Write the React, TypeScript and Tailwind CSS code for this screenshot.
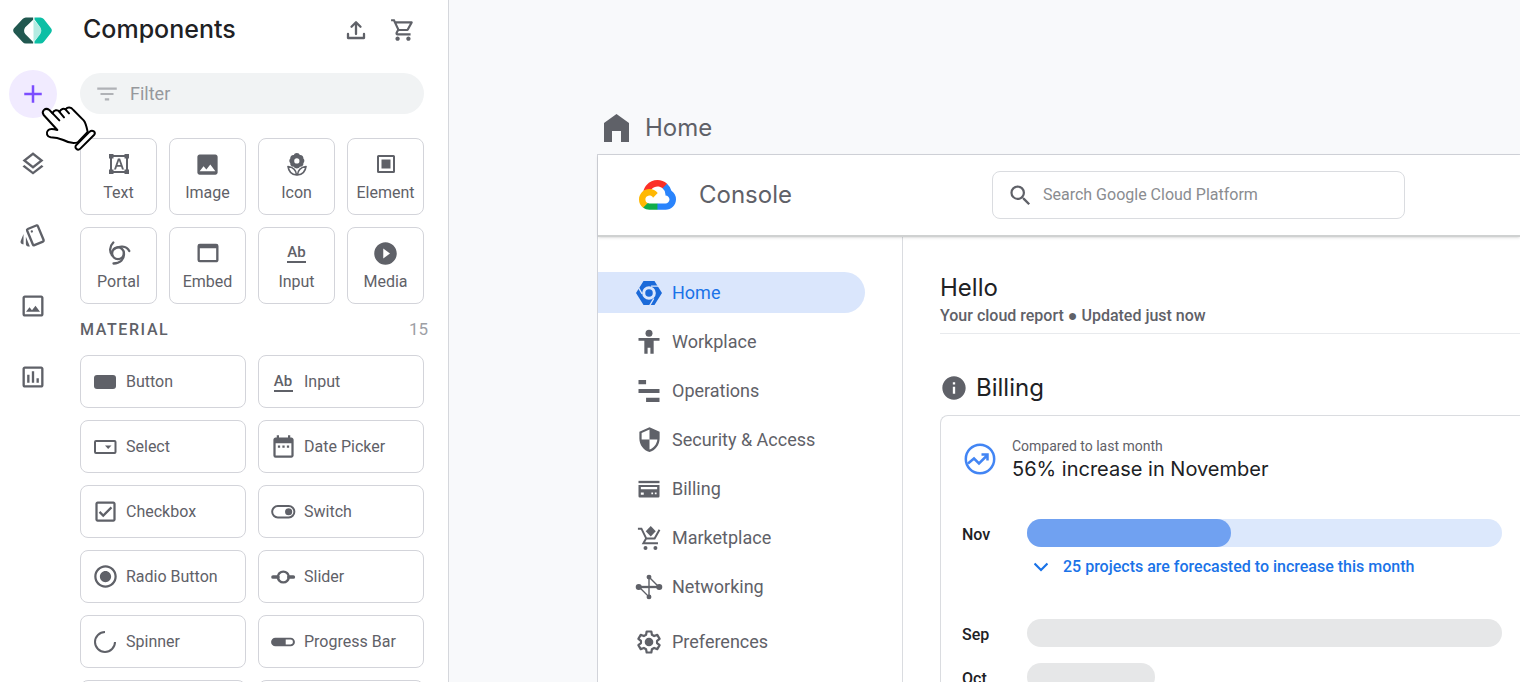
import type { ReactNode } from "react";
import {
  MdAdd,
  MdDateRange,
  MdFilterList,
  MdImage,
  MdInfo,
  MdOutlineCheckBox,
  MdOutlineImage,
  MdOutlineInsertChart,
  MdOutlineLayers,
  MdOutlineShoppingCart,
  MdOutlineStyle,
  MdPlayCircleFilled,
  MdRadioButtonChecked,
  MdSearch,
  MdSecurity,
  MdWebAsset,
} from "react-icons/md";

const sans = "font-['Roboto',sans-serif]";
const display = "font-['Inter',sans-serif]";

function Svg({ children, box = "0 0 24 24", className = "size-7" }: { children: ReactNode; box?: string; className?: string }) {
  return (
    <svg viewBox={box} className={className} fill="currentColor" aria-hidden="true">
      {children}
    </svg>
  );
}

function AbIcon() {
  return (
    <span className="flex w-[19px] flex-col items-center border-b-2 border-current text-[15px] leading-[18px] font-medium" aria-hidden="true">
      Ab
    </span>
  );
}

function Logo() {
  return (
    <Svg box="39 53 118 81" className="h-[27px] w-[39px]">
      <path fill="#215850" d="M100 54H78q-6 0-10 5L42 87q-5 6 0 13l26 28q4 5 10 5h22v-5L76 104q-7-10 0-20l24-23z" />
      <path fill="#b4ece2" d="M101 60l20 24q7 10 0 20l-20 24z" />
      <path fill="#0cbfa5" d="M104 54h18q6 0 10 5l22 28q5 6 0 13l-22 28q-4 5-10 5h-18v-6l17-22q7-11 0-22l-17-23z" />
    </Svg>
  );
}

function HandCursor() {
  return (
    <svg viewBox="120 315 171 141" className="pointer-events-none absolute top-[105px] left-10 z-10 h-[47px] w-[57px]" aria-hidden="true">
      <g fill="#fff" stroke="#000" strokeWidth="6" strokeLinecap="round" strokeLinejoin="round">
        <path d="M172 390L131 345C123 333 136 321 148 330L158 340C161 329 172 328 179 335C183 326 191 325 197 328C203 320 213 321 220 330L251 361C258 369 260 382 263 396L233 427C218 432 203 427 190 420C176 414 164 412 152 412C141 410 137 399 144 391C149 385 162 387 172 390Z" />
        <path fill="none" d="M155 337l23 24M177 334l15 18M197 329l10 11" />
        <path d="M229 435L269 395C277 388 290 396 282 405L241 446C233 454 221 443 229 435Z" />
      </g>
    </svg>
  );
}

function CloudLogo() {
  return (
    <Svg box="0 0 256 206" className="h-[30px] w-[37px]">
      <path fill="#fc2f27" d="m170.252 56.819 22.253-22.253 1.483-9.37C153.437-11.677 88.976-7.496 52.42 33.92 42.267 45.423 34.734 59.764 30.717 74.573l7.97-1.123 44.505-7.34 3.436-3.513c19.797-21.742 53.27-24.667 76.128-6.168l7.496.39Z" />
      <path fill="#2a84fc" d="M224.205 73.918a100.249 100.249 0 0 0-30.217-48.722l-31.232 31.232a55.515 55.515 0 0 1 20.379 44.037v5.544c15.35 0 27.797 12.445 27.797 27.796 0 15.352-12.446 27.485-27.797 27.485h-55.671l-5.466 5.934v33.34l5.466 5.231h55.67c39.93.311 72.553-31.494 72.864-71.424a72.303 72.303 0 0 0-31.793-60.453" />
      <path fill="#0fad4b" d="M71.87 205.796h55.593V161.29H71.87a27.275 27.275 0 0 1-11.4-2.498l-7.887 2.42-22.409 22.253-1.952 7.574a71.79 71.79 0 0 0 43.648 14.757" />
      <path fill="#ffb803" d="M71.87 61.425C31.94 61.664-.237 94.228.002 134.158a72.301 72.301 0 0 0 28.222 56.881l32.247-32.246c-13.99-6.322-20.208-22.786-13.887-36.776 6.32-13.99 22.786-20.208 36.775-13.888a27.796 27.796 0 0 1 13.887 13.888l32.247-32.248A72.224 72.224 0 0 0 71.87 61.425" />
    </Svg>
  );
}

const rail = [
  { label: "Layers", icon: <MdOutlineLayers /> },
  { label: "Styles", icon: <MdOutlineStyle /> },
  { label: "Images", icon: <MdOutlineImage /> },
  { label: "Charts", icon: <MdOutlineInsertChart /> },
];

const basics = [
  {
    label: "Text",
    icon: (
      <Svg className="size-6">
        <path fillRule="evenodd" d="M2 2h4.500v1h11V2H22v4.500h-1v11h1V22h-4.500v-1h-11v1H2v-4.500h1v-11H2zM6.500 5v1.500H5v11h1.500V19h11v-1.500H19v-11h-1.500V5z" />
        <path d="M7 17.500L10.900 6.500h2.200l3.900 11h-2l-.9-2.700H9.900L9 17.500zM10.500 13.100h3L12 8.700z" />
      </Svg>
    ),
  },
  { label: "Image", icon: <MdImage size={27} /> },
  {
    label: "Icon",
    icon: (
      <Svg box="0 0 61 70" className="h-[23px] w-5">
        <path
          fillRule="evenodd"
          d="M30 0c5 0 8 3 9 6 6-1 12 4 11 11 4 3 4 11 0 14 1 7-5 12-11 11-1 3-5 5-9 5s-8-2-9-5c-6 1-12-4-11-11-4-3-4-11 0-14-1-7 5-12 11-11 1-3 4-6 9-6zM30 16a8 8 0 1 0 0 16a8 8 0 1 0 0-16z"
        />
        <path fill="none" stroke="currentColor" strokeWidth="5" strokeLinejoin="round" d="M3 41C5 57 15 66 29 67C28 53 18 43 3 41zM58 41C56 57 46 66 32 67C33 53 43 43 58 41z" />
      </Svg>
    ),
  },
  {
    label: "Element",
    icon: (
      <Svg className="size-6">
        <path fillRule="evenodd" d="M4.500 3h15A1.500 1.500 0 0 1 21 4.500v15a1.500 1.500 0 0 1-1.500 1.500h-15A1.500 1.500 0 0 1 3 19.500v-15A1.500 1.500 0 0 1 4.500 3zM5 5v14h14V5zM7.500 7.500h9v9h-9z" />
      </Svg>
    ),
  },
  {
    label: "Portal",
    icon: (
      <Svg className="size-6">
        <g fill="none" stroke="currentColor" strokeWidth="2.300" strokeLinecap="round">
          <circle cx="11" cy="12.300" r="5.900" />
          <path d="M6.300 1.500C2.300 5.500 2.300 11 5.300 14.500M7 8C12 4.500 19.500 4.500 22.300 10M16.900 12.300C17.500 18.500 13 22.500 6.500 22.500" />
        </g>
      </Svg>
    ),
  },
  { label: "Embed", icon: <MdWebAsset size={28} /> },
  { label: "Input", icon: <AbIcon /> },
  { label: "Media", icon: <MdPlayCircleFilled size={27} /> },
];

const material = [
  { label: "Button", icon: <Svg className="size-6"><rect x="1" y="5" width="22" height="14" rx="3" /></Svg> },
  { label: "Input", icon: <AbIcon /> },
  {
    label: "Select",
    icon: (
      <Svg className="size-6">
        <rect x="2" y="6" width="20.500" height="12" rx="1" fill="none" stroke="currentColor" strokeWidth="2" />
        <path d="M12 10.500h6.500L15.200 14z" />
      </Svg>
    ),
  },
  { label: "Date Picker", icon: <MdDateRange size={27} /> },
  { label: "Checkbox", icon: <MdOutlineCheckBox size={27} /> },
  {
    label: "Switch",
    icon: (
      <Svg className="size-[26px]">
        <rect x="2" y="6.500" width="20.500" height="10.500" rx="5.200" fill="none" stroke="currentColor" strokeWidth="1.800" />
        <circle cx="17.200" cy="11.800" r="3.300" />
      </Svg>
    ),
  },
  { label: "Radio Button", icon: <MdRadioButtonChecked size={27} /> },
  {
    label: "Slider",
    icon: (
      <Svg className="size-[26px]">
        <path stroke="currentColor" strokeWidth="3.400" strokeLinecap="round" d="M2.800 12h4.500M17.500 12h4" />
        <circle cx="12.300" cy="12" r="5" fill="none" stroke="currentColor" strokeWidth="2.200" />
      </Svg>
    ),
  },
  {
    label: "Spinner",
    icon: (
      <Svg className="size-6">
        <path fill="none" stroke="currentColor" strokeWidth="2" d="M12 2A10 10 0 1 0 22 12" />
      </Svg>
    ),
  },
  {
    label: "Progress Bar",
    icon: (
      <Svg className="size-[26px]">
        <path fillRule="evenodd" d="M5 8h14a4 4 0 0 1 0 8H5a4 4 0 0 1 0-8zM14.500 9.800v4.400H19a2.200 2.200 0 0 0 0-4.400z" />
      </Svg>
    ),
  },
  { label: "Tabs", icon: <MdWebAsset size={26} /> },
  { label: "Card", icon: <MdImage size={26} /> },
];

const sideNav = [
  {
    label: "Home",
    icon: (
      <Svg box="0 0 76 70" className="h-6 w-[26px] text-[#1b6ad9]">
        <path fillRule="evenodd" d="M22 0H54L76 35L54 70H22L0 35zM38 15a20 20 0 1 0 0 40a20 20 0 1 0 0-40z" />
        <circle cx="38" cy="35" r="11" />
        <path stroke="#dae6fc" strokeWidth="4" d="M44 15H74M52 51L37 77M18 38L3 12" />
      </Svg>
    ),
  },
  {
    label: "Workplace",
    icon: <Svg className="size-7"><circle cx="12" cy="4.500" r="3" /><path d="M3 8.500h18v2.400h-5V22h-2.800v-5h-2.400v5H8V10.900H3z" /></Svg>,
  },
  {
    label: "Operations",
    icon: <Svg className="size-7"><path d="M3 2.500h6.500v3.800H3zM3 10.200h18v3.600H3zM9.500 17.700H21v3.800H9.500z" /></Svg>,
  },
  { label: "Security & Access", icon: <MdSecurity size={27} /> },
  {
    label: "Billing",
    icon: (
      <Svg className="size-7">
        <path d="M3 5h18v2H3z" />
        <path fillRule="evenodd" d="M3 8.500h18v9.700a1 1 0 0 1-1 1H4a1 1 0 0 1-1-1zM5 10.200v2h14v-2zM5 15v2h2.500v-2zM14 15v1.500h1.500V15zM17 15v1.500h1.500V15z" />
      </Svg>
    ),
  },
  {
    label: "Marketplace",
    icon: (
      <Svg className="size-7">
        <path fill="none" stroke="currentColor" strokeWidth="1.700" d="M2.500 4h3l4.200 8.500h7.100L21 5M9.500 12.500l-2.300 4h12.500" />
        <path d="M13.500 1.800l4.300 4.500-4.300 4.400-4.300-4.400z" />
        <circle cx="9" cy="20.500" r="1.700" /><circle cx="17.500" cy="20.500" r="1.700" />
      </Svg>
    ),
  },
  {
    label: "Networking",
    icon: (
      <Svg className="size-7">
        <path fill="none" stroke="currentColor" strokeWidth="1.200" d="M12 3.500V12M12 3.500l8.500 8.500M3.500 12L12 20.500V12" />
        <path stroke="currentColor" strokeWidth="2" d="M3.500 12h17" />
        <circle cx="3.200" cy="12" r="2.600" /><circle cx="20.800" cy="12" r="2.600" /><circle cx="12" cy="3.500" r="2.100" /><circle cx="12" cy="20.500" r="2.100" />
      </Svg>
    ),
  },
  {
    label: "Preferences",
    icon: (
      <Svg className="size-7">
        <path
          fill="none"
          stroke="currentColor"
          strokeWidth="1.900"
          strokeLinejoin="round"
          d="M10 3h4l.5 2.800 1.900 1.100 2.700-1 2 3.400-2.200 1.800v1.800l2.200 1.800-2 3.400-2.700-1-1.900 1.100L14 21h-4l-.5-2.800-1.900-1.100-2.700 1-2-3.400 2.200-1.800v-1.800L2.900 9.300l2-3.400 2.700 1 1.900-1.100z"
        />
        <circle cx="12" cy="12" r="3.700" />
      </Svg>
    ),
  },
];

function Palette() {
  return (
    <aside className="flex shrink-0 border-r border-[#d5d7dc] bg-white text-[#5f6168]">
      <nav aria-label="Panels" className="flex w-16 flex-col items-center pt-[17px] pl-px">
        <a href="#home" aria-label="Workspace"><Logo /></a>
        <button aria-label="Add component" className="mt-[26px] flex size-12 shrink-0 items-center justify-center rounded-full bg-[#f1ebff] text-[30px] text-[#7c4dff]">
          <MdAdd />
        </button>
        <div className="mt-8 flex flex-col gap-[43px] text-[28px]">
          {rail.map((r) => (
            <button key={r.label} aria-label={r.label} className="size-7">{r.icon}</button>
          ))}
        </div>
      </nav>
      <div className="w-[384px] pr-6 pl-4">
        <header className="flex h-[60px] items-center">
          <h1 className={`flex-1 pl-[3px] text-[25px] font-medium text-[#202124] ${display}`}>Components</h1>
          <button aria-label="Upload" className="mr-[22px]">
            <Svg className="size-6">
              <path fill="none" stroke="currentColor" strokeWidth="2.300" strokeLinejoin="round" strokeLinecap="round" d="M4 16v4h16V16M12 16V5M7.500 8.800L12 4.300l4.500 4.500" />
            </Svg>
          </button>
          <button aria-label="Cart" className="mr-2 text-[26px]"><MdOutlineShoppingCart /></button>
        </header>
        <label className="mt-[13px] flex h-[41px] items-center gap-[10px] rounded-full bg-[#f1f3f4] px-[14px]">
          <MdFilterList size={26} className="shrink-0 text-[#b0b2b6]" />
          <input aria-label="Filter" placeholder="Filter" className="w-full min-w-0 bg-transparent text-[18px] outline-none placeholder:text-[#96989c]" />
        </label>
        <div className="mt-6 grid grid-cols-4 gap-3">
          {basics.map((b) => (
            <button key={b.label} className="flex h-[77px] flex-col items-center rounded-lg border border-[#d3d4da] pt-[9px] text-[16px] leading-6">
              <span className="flex h-8 items-center">{b.icon}</span>
              <span className="mt-px">{b.label}</span>
            </button>
          ))}
        </div>
        <div className="mt-4 -mr-1 flex h-5 items-center justify-between">
          <h2 className="text-[16px] font-medium tracking-widest">MATERIAL</h2>
          <span className="text-[17px] text-[#9da0a5]">15</span>
        </div>
        <div className="mt-[15px] grid grid-cols-2 gap-3">
          {material.map((m) => (
            <button key={m.label} className="flex h-[53px] items-center gap-[7px] rounded-lg border border-[#d3d4da] px-[10px] text-[16px]">
              <span className="flex w-7 justify-center">{m.icon}</span>
              <span>{m.label}</span>
            </button>
          ))}
        </div>
      </div>
    </aside>
  );
}

function Bar({ month, children }: { month: string; children: ReactNode }) {
  return (
    <div className="flex items-start">
      <span className="w-[65px] pt-1 text-[16px] leading-6 font-medium text-[#202124]">{month}</span>
      <div className="flex-1">{children}</div>
    </div>
  );
}

function Report() {
  return (
    <div className="min-w-0 flex-1 pt-[35px] pl-[37px]">
      <h2 className={`text-[24px] leading-8 text-[#202124] ${display}`}>Hello</h2>
      <p className="border-b border-[#e8eaed] pb-[5px] text-[16px] leading-6 font-medium">Your cloud report ● Updated just now</p>
      <h3 className={`mt-[38px] flex h-8 items-center gap-2 text-[24px] text-[#202124] ${display}`}>
        <MdInfo size={28} className="text-[#5f6168]" />
        Billing
      </h3>
      <section className="mt-[11px] rounded-tl-lg border-t border-l border-[#dadce0] pt-5 pr-[18px] pb-6 pl-[21px]">
        <div className="flex items-center gap-4 pl-[2px]">
          <Svg box="0 0 32 32" className="size-8 text-[#4285f4]">
            <g fill="none" stroke="currentColor" strokeWidth="2.500">
              <circle cx="16" cy="16" r="14.200" />
              <path d="M4 20.500l6-5 5 5 8-8M17.500 11.500h6v6" />
            </g>
          </Svg>
          <div>
            <p className="text-[14px] leading-5">Compared to last month</p>
            <p className={`text-[20px] leading-[26px] text-[#202124] ${display}`}>56% increase in November</p>
          </div>
        </div>
        <div className="mt-[37px] flex flex-col gap-4">
          <Bar month="Nov">
            <div className="h-7 rounded-full bg-[#dce8fc]">
              <div className="h-full w-[43%] rounded-full bg-[#70a1f1]" />
            </div>
            <button className="mt-2 mb-6 flex items-center gap-[15px] pl-[7px] text-[16px] leading-6 font-medium text-[#1a73e8]">
              <Svg className="size-[14px]"><path fill="none" stroke="currentColor" strokeWidth="3.600" d="M1 6l11 11L23 6" /></Svg>
              25 projects are forecasted to increase this month
            </button>
          </Bar>
          <Bar month="Sep"><div className="h-7 rounded-full bg-[#e6e7e8]" /></Bar>
          <Bar month="Oct"><div className="h-7 w-[27%] rounded-full bg-[#e6e7e8]" /></Bar>
        </div>
      </section>
    </div>
  );
}

export default function App() {
  return (
    <div className={`relative flex h-screen overflow-hidden bg-[#f8f9fb] text-[#5f6168] ${sans}`}>
      <Palette />
      <HandCursor />
      <main className="flex min-w-0 flex-1 flex-col pt-[102px] pl-[148px]">
        <div className="flex h-[52px] shrink-0 items-center gap-4 pl-[7px]">
          <Svg box="0 0 25 28" className="h-7 w-[25px]"><path d="M12.500 0L25 9v19h-8V17H8v11H0V9z" /></Svg>
          <span className={`text-[24px] ${display}`}>Home</span>
        </div>
        <div className="flex flex-1 flex-col border-t border-l border-[#d2d4da] bg-white">
          <header className="relative flex h-[82px] shrink-0 items-center border-b-2 border-[#cfd1d1] pl-[41px] shadow-sm">
            <CloudLogo />
            <span className={`w-[316px] pl-[23px] text-[24px] ${display}`}>Console</span>
            <label className="flex h-12 w-[413px] items-center gap-[9px] rounded-lg border border-[#dadce0] px-[14px]">
              <MdSearch size={27} className="shrink-0" />
              <input aria-label="Search Google Cloud Platform" placeholder="Search Google Cloud Platform" className="w-full min-w-0 bg-transparent text-[16px] outline-none placeholder:text-[#8a8c90]" />
            </label>
          </header>
          <div className="flex flex-1">
            <nav aria-label="Console" className="flex w-[305px] shrink-0 flex-col gap-2 border-r border-[#dadce0] pt-[35px] pr-[37px]">
              {sideNav.map((n) => (
                <a
                  key={n.label}
                  href={`#${n.label}`}
                  className="flex h-[41px] shrink-0 items-center gap-[9px] rounded-r-full pl-[37px] text-[18px] first:bg-[#dae6fc] first:text-[#1a73e8] last:mt-1.5"
                >
                  <span className="flex w-7 justify-center">{n.icon}</span>
                  {n.label}
                </a>
              ))}
            </nav>
            <Report />
          </div>
        </div>
      </main>
    </div>
  );
}
